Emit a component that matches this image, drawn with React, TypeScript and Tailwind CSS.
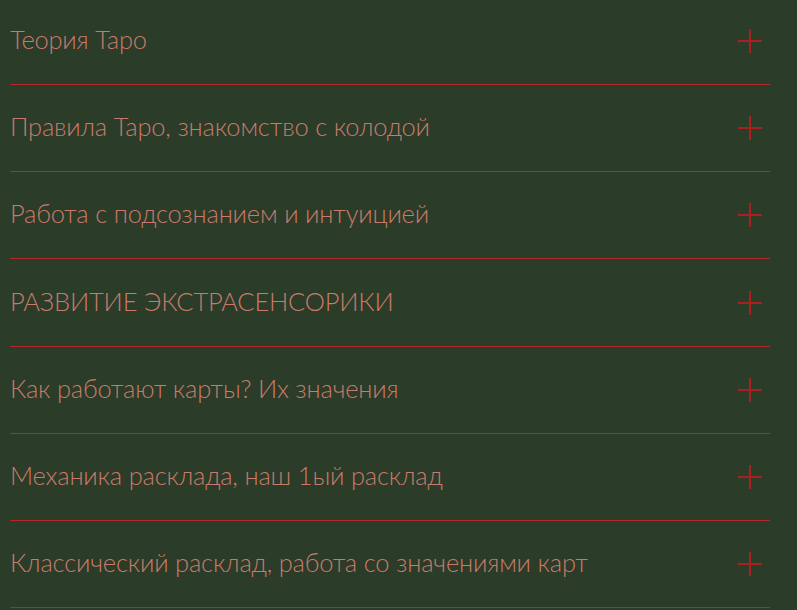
import { useState } from 'react';

const ITEMS = [
  { title: 'Теория Таро', dim: false, tall: true },
  { title: 'Правила Таро, знакомство с колодой', dim: true, tall: false },
  { title: 'Работа с подсознанием и интуицией', dim: false, tall: false },
  { title: 'РАЗВИТИЕ ЭКСТРАСЕНСОРИКИ', dim: false, tall: true },
  { title: 'Как работают карты? Их значения', dim: true, tall: false },
  { title: 'Механика расклада, наш 1ый расклад', dim: false, tall: false },
  { title: 'Классический расклад, работа со значениями карт', dim: false, tall: false },
];

function PlusIcon() {
  return (
    <svg width="24" height="24" viewBox="0 0 24 24" className="shrink-0">
      <path d="M12 0v24M0 12h24" stroke="#a8201f" strokeWidth="2" fill="none" />
    </svg>
  );
}

export default function App() {
  const [open, setOpen] = useState<number | null>(null);

  return (
    <div className="h-[610px] w-full overflow-hidden bg-[#2b3c28] pl-[10px] pr-[27px]" style={{ fontFamily: 'Lato, "Noto Sans", sans-serif' }}>
      <ul className="mt-[-3px]">
        {ITEMS.map((item, i) => (
          <li
            key={item.title}
            className={item.dim ? 'border-b border-[#7b4438]' : 'border-b border-[#b5262a]'}
          >
            <button
              onClick={() => setOpen(open === i ? null : i)}
              className={
                'flex w-full items-center justify-between pr-[8px] text-left ' +
                (item.tall ? 'h-[87px]' : 'h-[86px]')
              }
            >
              <span className="mb-[4px] text-[25.5px] leading-[30px] font-light tracking-[-0.2px] text-[#c97a6c]">{item.title}</span>
              <PlusIcon />
            </button>
          </li>
        ))}
      </ul>
    </div>
  );
}
